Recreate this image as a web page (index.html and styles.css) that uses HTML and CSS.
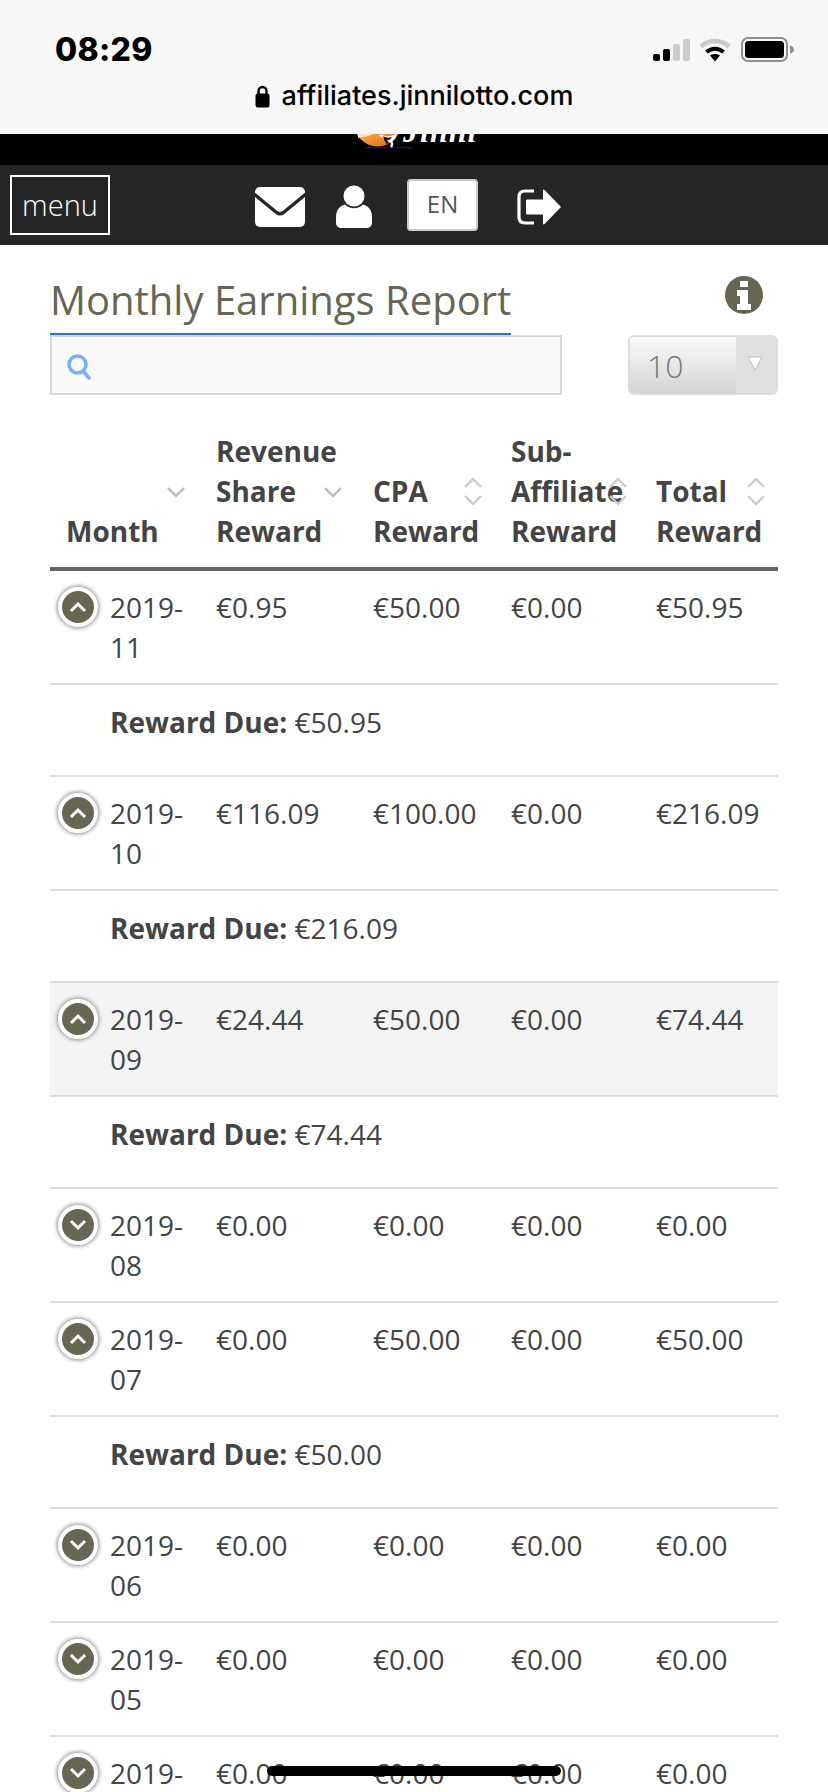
FILE: index.html
```html
<!DOCTYPE html>
<html lang="en">
<head>
<meta charset="utf-8">
<title>Monthly Earnings Report</title>
<link rel="stylesheet" href="styles.css">
</head>
<body>
<div class="page">
  <header class="browser">
    <div class="status">
      <span class="time">08:29</span>
      <div class="indicators">
        <svg class="signal" width="37" height="22" viewBox="0 0 37 22"><rect x="0" y="15" width="7" height="7" rx="2" fill="#000"/><rect x="10" y="10" width="7" height="12" rx="2" fill="#000"/><rect x="20" y="5" width="7" height="17" rx="2" fill="#ccc"/><rect x="30" y="0" width="7" height="22" rx="2" fill="#ccc"/></svg>
        <svg class="wifi" width="32" height="25" viewBox="0 0 32 25"><path d="M2 9.500C10 2 22 2 30 9.500" fill="none" stroke="#c9c9c9" stroke-width="4.500"/><path d="M7.500 15c5-4.400 12-4.400 17 0" fill="none" stroke="#000" stroke-width="4"/><path d="M11 18.500c3-2 7-2 10 0L16 24.500z" fill="#000"/></svg>
        <svg class="battery" width="53" height="25" viewBox="0 0 53 25"><rect x="1" y="1" width="45" height="23" rx="6" fill="none" stroke="#8e8e8e" stroke-width="2"/><rect x="4" y="4" width="39" height="17" rx="3.500" fill="#000"/><path d="M49 8.500c2.500.5 4 2 4 4s-1.500 3.500-4 4z" fill="#8e8e8e"/></svg>
      </div>
    </div>
    <div class="address">
      <svg class="lock" width="15" height="23" viewBox="0 0 15 23"><path d="M3.500 9V6a4 4 0 0 1 8 0v3" fill="none" stroke="#000" stroke-width="2.400"/><rect x="0.500" y="8.500" width="14" height="14" rx="2.500" fill="#000"/></svg>
      <span class="url">affiliates.jinnilotto.com</span>
    </div>
  </header>

  <div class="logo-strip">
    <div class="logo">
      <svg class="logo-ball" width="60" height="50" viewBox="0 0 60 50"><defs><linearGradient id="ballGrad" x1="0" y1="0" x2="0.600" y2="1"><stop offset="0.600" stop-color="#f7a94e"/><stop offset="1" stop-color="#e97a1a"/></linearGradient></defs><rect x="12" y="48" width="47" height="1.500" fill="#16164a"/><circle cx="24.500" cy="24" r="23.500" fill="url(#ballGrad)"/><path d="M5 37c4 0 9-1 14-3" fill="none" stroke="#ffe6c4" stroke-width="3.500"/><path d="M27 36c5 4 10 3 15 1-1 3-2 4-5 5 2 1 3 3 1 6" fill="none" stroke="#fff" stroke-width="2.500"/><path d="M30 37c3 2 6 2 9 1-1 2-3 3-5 3 1 1 2 3 1 5-3-2-4-6-5-9z" fill="#141421"/></svg>
      <span class="logo-text">Jinni</span>
    </div>
  </div>

  <nav class="nav">
    <a class="menu-btn">menu</a>
    <svg class="icon-mail" width="50" height="40" viewBox="0 0 50 40"><rect width="50" height="40" rx="5" fill="#fff"/><path d="M-1 7 21.500 25.500q3.500 2.500 7 0L51 7" fill="none" stroke="#262626" stroke-width="3.400"/></svg>
    <svg class="icon-user" width="36" height="43" viewBox="0 0 36 43"><circle cx="18" cy="11" r="10.500" fill="#fff"/><path d="M9 19.500c5 5 13 5 18 0 6 1.500 9 6 9 13v5c0 3-2 5.500-5 5.500H5c-3 0-5-2.500-5-5.500v-5c0-7 3-11.500 9-13z" fill="#fff"/></svg>
    <a class="lang">EN</a>
    <svg class="icon-exit" width="44" height="36" viewBox="0 0 44 36"><path d="M17 2H8Q2 2 2 8V28Q2 34 8 34H17" fill="none" stroke="#fff" stroke-width="3.200"/><path d="M10 10.500H26V1.500Q26 0 27.500 1L44 18 27.500 35Q26 36 26 34.500V25.500H10Q9 25.500 9 24V12Q9 10.500 10 10.500z" fill="#fff"/></svg>
  </nav>

  <main class="content">
    <div class="title-row">
      <h1 class="title">Monthly Earnings Report</h1>
      <svg class="info" width="38" height="38" viewBox="0 0 38 38"><circle cx="19" cy="19" r="19" fill="#666652"/><path d="M15 5h8v6h-8zM12 14h11v14h3v6H12v-6h3v-8h-3z" fill="#fff"/></svg>
    </div>

    <div class="filters">
      <div class="search">
        <svg width="24" height="26" viewBox="0 0 24 26"><circle cx="10.500" cy="10.500" r="8.500" fill="none" stroke="#72b1fb" stroke-width="3.600"/><path d="M16 17l6 7" stroke="#72b1fb" stroke-width="3.600" stroke-linecap="round"/></svg>
      </div>
      <div class="pagesize">
        <span class="pagesize-value">10</span>
        <span class="pagesize-arrow"><svg width="16" height="15" viewBox="0 0 16 15"><path d="M1 1h14L8 14z" fill="#fff" stroke="#bdbdbd" stroke-width="1"/></svg></span>
      </div>
    </div>

    <table class="report">
      <colgroup><col class="c1"><col class="c2"><col class="c3"><col class="c4"><col class="c5"></colgroup>
      <thead>
        <tr>
          <th>Month<svg class="sort sort-single" width="20" height="32" viewBox="0 0 20 32"><path d="M2 12l8 8 8-8" fill="none" stroke="#bbb" stroke-width="2.400"/></svg></th>
          <th>Revenue Share Reward<svg class="sort sort-single" width="20" height="32" viewBox="0 0 20 32"><path d="M2 12l8 8 8-8" fill="none" stroke="#bbb" stroke-width="2.400"/></svg></th>
          <th>CPA Reward<svg class="sort" width="20" height="32" viewBox="0 0 20 32"><path d="M2 11l8-8 8 8M2 20l8 8 8-8" fill="none" stroke="#ccc" stroke-width="2.400"/></svg></th>
          <th>Sub-Affiliate Reward<svg class="sort" width="20" height="32" viewBox="0 0 20 32"><path d="M2 11l8-8 8 8M2 20l8 8 8-8" fill="none" stroke="#ccc" stroke-width="2.400"/></svg></th>
          <th>Total Reward<svg class="sort" width="20" height="32" viewBox="0 0 20 32"><path d="M2 11l8-8 8 8M2 20l8 8 8-8" fill="none" stroke="#ccc" stroke-width="2.400"/></svg></th>
        </tr>
      </thead>
      <tbody>
        <tr>
          <td><div class="month"><span class="toggle"><svg width="18" height="12" viewBox="0 0 18 12"><path d="M2 10l7-7 7 7" fill="none" stroke="#fff" stroke-width="3"/></svg></span><span>2019-11</span></div></td>
          <td>€0.95</td><td>€50.00</td><td>€0.00</td><td>€50.95</td>
        </tr>
        <tr class="due"><td colspan="5"><b>Reward Due:</b> €50.95</td></tr>
        <tr>
          <td><div class="month"><span class="toggle"><svg width="18" height="12" viewBox="0 0 18 12"><path d="M2 10l7-7 7 7" fill="none" stroke="#fff" stroke-width="3"/></svg></span><span>2019-10</span></div></td>
          <td>€116.09</td><td>€100.00</td><td>€0.00</td><td>€216.09</td>
        </tr>
        <tr class="due"><td colspan="5"><b>Reward Due:</b> €216.09</td></tr>
        <tr class="hover">
          <td><div class="month"><span class="toggle"><svg width="18" height="12" viewBox="0 0 18 12"><path d="M2 10l7-7 7 7" fill="none" stroke="#fff" stroke-width="3"/></svg></span><span>2019-09</span></div></td>
          <td>€24.44</td><td>€50.00</td><td>€0.00</td><td>€74.44</td>
        </tr>
        <tr class="due"><td colspan="5"><b>Reward Due:</b> €74.44</td></tr>
        <tr>
          <td><div class="month"><span class="toggle"><svg width="18" height="12" viewBox="0 0 18 12"><path d="M2 2l7 7 7-7" fill="none" stroke="#fff" stroke-width="3"/></svg></span><span>2019-08</span></div></td>
          <td>€0.00</td><td>€0.00</td><td>€0.00</td><td>€0.00</td>
        </tr>
        <tr>
          <td><div class="month"><span class="toggle"><svg width="18" height="12" viewBox="0 0 18 12"><path d="M2 10l7-7 7 7" fill="none" stroke="#fff" stroke-width="3"/></svg></span><span>2019-07</span></div></td>
          <td>€0.00</td><td>€50.00</td><td>€0.00</td><td>€50.00</td>
        </tr>
        <tr class="due"><td colspan="5"><b>Reward Due:</b> €50.00</td></tr>
        <tr>
          <td><div class="month"><span class="toggle"><svg width="18" height="12" viewBox="0 0 18 12"><path d="M2 2l7 7 7-7" fill="none" stroke="#fff" stroke-width="3"/></svg></span><span>2019-06</span></div></td>
          <td>€0.00</td><td>€0.00</td><td>€0.00</td><td>€0.00</td>
        </tr>
        <tr>
          <td><div class="month"><span class="toggle"><svg width="18" height="12" viewBox="0 0 18 12"><path d="M2 2l7 7 7-7" fill="none" stroke="#fff" stroke-width="3"/></svg></span><span>2019-05</span></div></td>
          <td>€0.00</td><td>€0.00</td><td>€0.00</td><td>€0.00</td>
        </tr>
        <tr>
          <td><div class="month"><span class="toggle"><svg width="18" height="12" viewBox="0 0 18 12"><path d="M2 2l7 7 7-7" fill="none" stroke="#fff" stroke-width="3"/></svg></span><span>2019-04</span></div></td>
          <td>€0.00</td><td>€0.00</td><td>€0.00</td><td>€0.00</td>
        </tr>
      </tbody>
    </table>
  </main>
  <div class="home-indicator"></div>
</div>
</body>
</html>
```
FILE: styles.css
```css
* { box-sizing: border-box; }
html, body { margin: 0; padding: 0; height: 1792px; overflow: hidden; background: #fff; }
body { font-family: "Open Sans", "Liberation Sans", sans-serif; color: #444; }
.page { position: relative; width: 828px; height: 1792px; overflow: hidden; }

.browser { height: 134px; background: #f7f7f7; padding-top: 37px; }
.status { display: flex; justify-content: space-between; align-items: center; height: 25px; padding: 0 34px 0 55px; }
.time { font-family: Inter, "Liberation Sans", sans-serif; font-weight: 800; font-size: 32px; line-height: 25px; color: #000; letter-spacing: 0.3px; }
.indicators { display: flex; align-items: center; }
.signal { margin-right: 9px; }
.wifi { margin-right: 10px; }
.address { display: flex; justify-content: center; align-items: center; gap: 12px; margin-top: 22px; height: 24px; }
.url { font-family: Inter, "Liberation Sans", sans-serif; font-weight: 500; font-size: 27px; line-height: 24px; color: #000; }
.lock { display: block; }

.logo-strip { height: 31px; background: #000; overflow: hidden; }
.logo { display: flex; align-items: flex-start; height: 50px; margin-top: -35px; padding-left: 353px; }
.logo-ball { display: block; flex: none; }
.logo-text { font-family: "Liberation Serif", serif; font-style: italic; font-weight: 700; font-size: 32px; line-height: 36px; color: #fff; letter-spacing: 1px; margin: 14px 0 0 -10px; }

.nav { height: 80px; background: #262626; display: flex; align-items: center; padding-left: 10px; }
.menu-btn { width: 100px; height: 60px; border: 2px solid #fff; color: #fff; font-size: 29px; font-weight: 300; line-height: 56px; text-align: center; }
.icon-mail { margin-left: 145px; margin-top: 4px; }
.icon-user { margin-left: 31px; margin-top: 2px; }
.lang { width: 71px; height: 52px; margin-left: 35px; background: #fff; border: 2px solid #ccc; border-radius: 4px; color: #555; font-size: 24px; line-height: 46px; text-align: center; }
.icon-exit { margin-left: 39px; margin-top: 4px; }

.content { padding: 0 50px; }
.title-row { display: flex; justify-content: space-between; align-items: flex-start; height: 90px; padding-right: 15px; }
.title { margin: 0; height: 90px; padding-top: 30px; border-bottom: 2px solid #2f6fd6; font-size: 40px; font-weight: 400; line-height: 50px; color: #666652; white-space: nowrap; }
.info { margin-top: 31px; }

.filters { display: flex; justify-content: space-between; height: 60px; }
.search { width: 512px; height: 60px; background: #fafafa; border: 2px solid #d9d9d9; padding: 17px 0 0 15px; }
.search svg { display: block; }
.pagesize { width: 150px; height: 60px; display: flex; border: 2px solid #ddd; border-radius: 6px; overflow: hidden; }
.pagesize-value { width: 106px; background: linear-gradient(#fbfbfb, #d4d4d4); font-size: 32px; font-weight: 300; color: #777; line-height: 57px; padding-left: 17px; }
.pagesize-arrow { flex: 1; background: #e0e0e0; padding: 19px 0 0 11px; }
.pagesize-arrow svg { display: block; }

.report { width: 728px; margin-top: 20px; border-collapse: separate; border-spacing: 0; table-layout: fixed; font-size: 28px; line-height: 40px; }
.c1 { width: 150px; }
.c2 { width: 157px; }
.c3 { width: 138px; }
.c4 { width: 145px; }
.c5 { width: 138px; }
.report th { position: relative; padding: 16px 12px 16px 16px; text-align: left; vertical-align: bottom; font-weight: 700; border-bottom: 4px solid #666; }
.sort { position: absolute; right: 12px; top: 61px; }
.sort-single { right: 14px; }
.report td { padding: 16px 0 16px 16px; vertical-align: top; border-bottom: 2px solid #ddd; font-weight: 400; }
.report td:first-child { padding-left: 8px; padding-right: 14px; }
.report .due td { padding: 17px 16px 33px 60px; }
.report .due b { font-weight: 700; }
.report .hover td { background: #f4f4f4; }
.month { display: flex; gap: 12px; }
.toggle { flex: none; width: 40px; height: 40px; display: flex; align-items: center; justify-content: center; border-radius: 50%; background: #666652; border: 4px solid #fff; box-shadow: 0 0 4px 1px #8a8a8a; }
.toggle svg { display: block; }

.home-indicator { position: absolute; left: 267px; top: 1766px; width: 294px; height: 10px; border-radius: 5px; background: #000; }
```
